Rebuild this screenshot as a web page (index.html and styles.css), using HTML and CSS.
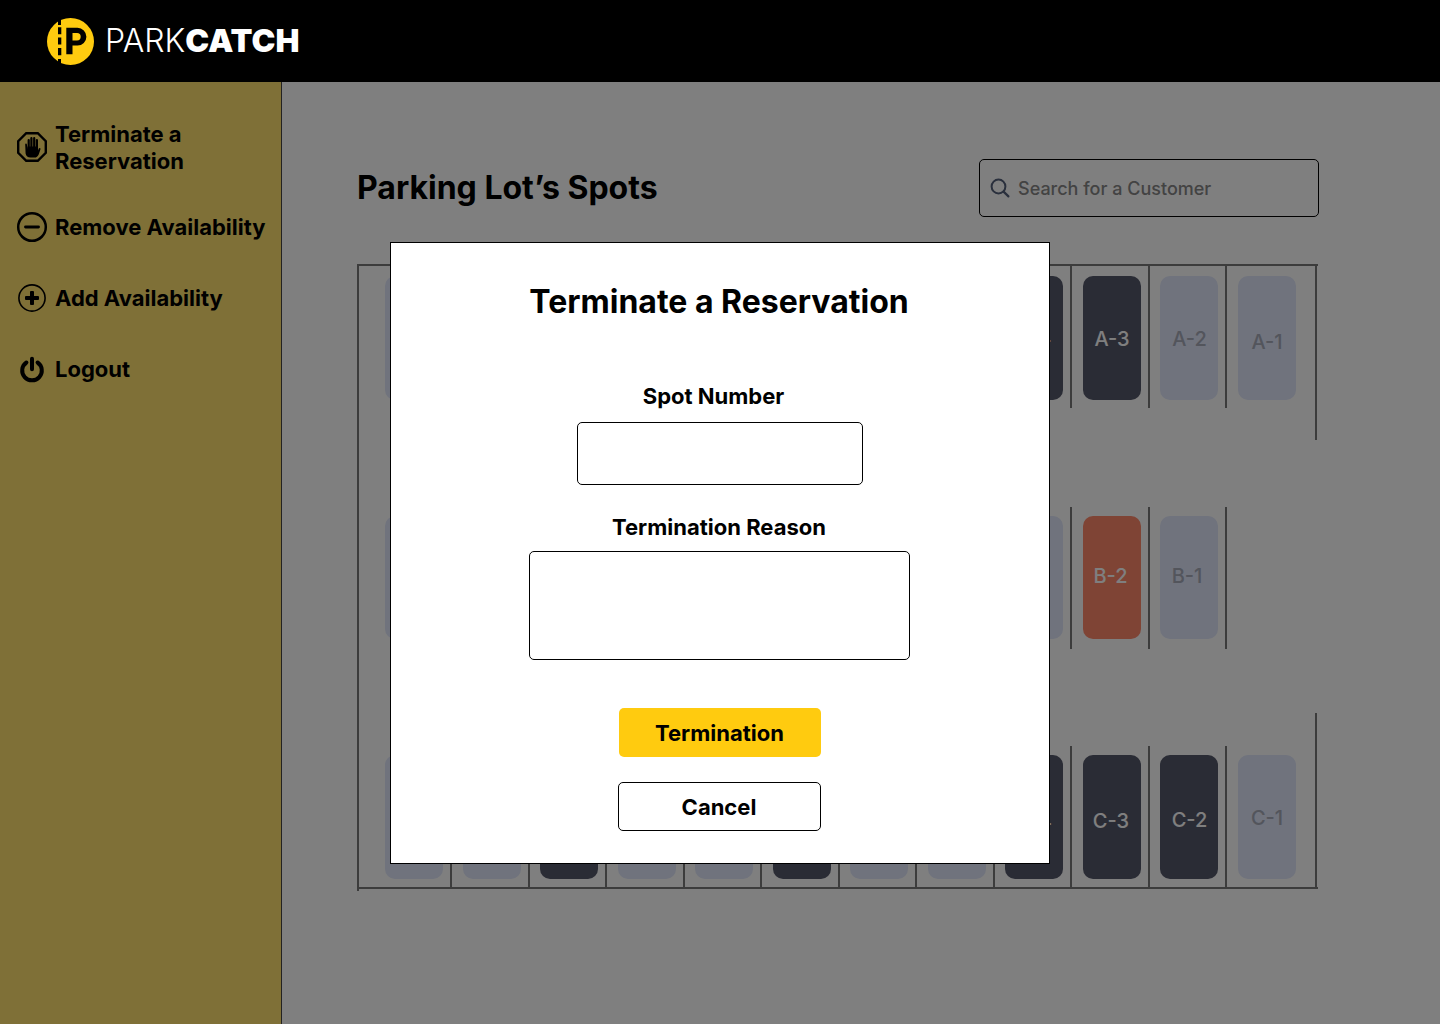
FILE: index.html
```html
<!DOCTYPE html>
<html lang="en">
<head>
<meta charset="utf-8">
<title>ParkCatch</title>
<link rel="stylesheet" href="styles.css">
</head>
<body>
<header class="topbar">
  <svg class="logo" width="48" height="48" viewBox="0 0 48 48">
    <circle cx="23.500" cy="24.500" r="23.500" fill="#ffcb0f"/>
    <path d="M11 0h3v8h-3zM11 10.300h3.300v7h-3.300zM11 20.500h3.300v7h-3.300zM11 31h3.300v7.300h-3.300zM11 42h3v6h-3z" fill="#000"/>
    <path fill-rule="evenodd" d="M19.300 10.800h11.200a8.900 8.900 0 0 1 0 17.800h-5v8.600h-6.200zM25.500 16v7.400h4.500a3.700 3.700 0 0 0 0-7.400z" fill="#000"/>
  </svg>
  <div class="brand">PARK<span class="brand-bold">CATCH</span></div>
</header>
<div class="layout">
  <nav class="sidebar">
    <a class="nav-item nav-tall">
      <svg width="32" height="32" viewBox="0 0 32 32">
        <path d="M10.200 2.200h11.600l8 8v11.600l-8 8H10.200l-8-8V10.200z" fill="none" stroke="#000" stroke-width="2.400"/>
        <path d="M12.700 18V9M15.400 17V7.200M18.200 17V7.200M20.900 18V9" fill="none" stroke="#000" stroke-width="2.200" stroke-linecap="round"/>
        <path d="M11.600 15.500H22V19.500L22.800 17.600Q23.400 16.500 24.300 17.200Q24.600 17.600 24.400 18.600L22.800 23.200Q21.300 26.600 18.500 26.600H14.500Q10.300 26.600 9.600 22.500L9.200 13.500Q9.200 12.500 10 12.500Q10.800 12.500 10.900 13.500L11.600 18z" fill="#000"/>
      </svg>
      <span class="nav-lines">Terminate a<br>Reservation</span>
    </a>
    <a class="nav-item">
      <svg width="32" height="32" viewBox="0 0 32 32"><circle cx="16" cy="16" r="13.800" fill="none" stroke="#000" stroke-width="2.500"/><path d="M9.500 16h13" stroke="#000" stroke-width="2.900" stroke-linecap="round"/></svg>
      <span>Remove Availability</span>
    </a>
    <a class="nav-item">
      <svg width="32" height="32" viewBox="0 0 32 32"><circle cx="16" cy="16" r="13.100" fill="none" stroke="#000" stroke-width="1.600"/><path d="M9.500 16h13M16 9.500v13" stroke="#000" stroke-width="4"/><path d="M9 16h14M16 9v14" stroke="#000" stroke-width="3"/></svg>
      <span>Add Availability</span>
    </a>
    <a class="nav-item">
      <svg width="32" height="32" viewBox="0 0 32 32"><path d="M10.400 9.500A9.800 9.800 0 1 0 21.600 9.500M16 5.800V16.200" fill="none" stroke="#000" stroke-width="4" stroke-linecap="round"/></svg>
      <span>Logout</span>
    </a>
  </nav>
  <main class="content">
    <div class="heading">
      <h1 class="title">Parking Lot’s Spots</h1>
      <div class="search">
        <svg width="22" height="22" viewBox="0 0 22 22"><circle cx="8.500" cy="9.500" r="6.900" fill="none" stroke="#54607a" stroke-width="2"/><path d="M13.600 14.600L18.400 19.400" stroke="#54607a" stroke-width="2.200" stroke-linecap="round"/></svg>
        <span>Search for a Customer</span>
      </div>
    </div>
    <div class="lot">
      <div class="side"></div>
      <div class="rows">
        <div class="row row-a">
          <div class="slot"><div class="spot"></div></div>
          <div class="slot"><div class="spot"></div></div>
          <div class="slot"><div class="spot"></div></div>
          <div class="slot"><div class="spot"></div></div>
          <div class="slot"><div class="spot"></div></div>
          <div class="slot"><div class="spot"></div></div>
          <div class="slot"><div class="spot"></div></div>
          <div class="slot"><div class="spot"></div></div>
          <div class="slot"><div class="spot taken left-1">A-4</div></div>
          <div class="slot"><div class="spot taken drop-1">A-3</div></div>
          <div class="slot"><div class="spot drop-1">A-2</div></div>
          <div class="slot last"><div class="spot drop-4">A-1</div></div>
        </div>
        <div class="row row-b">
          <div class="slot"><div class="spot"></div></div>
          <div class="slot"><div class="spot"></div></div>
          <div class="slot"><div class="spot"></div></div>
          <div class="slot"><div class="spot"></div></div>
          <div class="slot"><div class="spot"></div></div>
          <div class="slot"><div class="spot"></div></div>
          <div class="slot"><div class="spot"></div></div>
          <div class="slot"><div class="spot"></div></div>
          <div class="slot"><div class="spot"></div></div>
          <div class="slot"><div class="spot expired left-3">B-2</div></div>
          <div class="slot"><div class="spot left-4">B-1</div></div>
        </div>
        <div class="row row-c">
          <div class="slot"><div class="spot"></div></div>
          <div class="slot"><div class="spot"></div></div>
          <div class="slot"><div class="spot taken"></div></div>
          <div class="slot"><div class="spot"></div></div>
          <div class="slot"><div class="spot"></div></div>
          <div class="slot"><div class="spot taken"></div></div>
          <div class="slot"><div class="spot"></div></div>
          <div class="slot"><div class="spot"></div></div>
          <div class="slot"><div class="spot taken drop-4 left-1">C-4</div></div>
          <div class="slot"><div class="spot taken drop-4 left-1">C-3</div></div>
          <div class="slot"><div class="spot taken drop-3">C-2</div></div>
          <div class="slot last"><div class="spot drop-1">C-1</div></div>
        </div>
      </div>
      <div class="walls"><div class="wall"></div><div class="wall"></div></div>
    </div>
  </main>
</div>
<div class="overlay">
  <form class="modal">
    <h2 class="modal-title">Terminate a Reservation</h2>
    <label class="label label-spot" for="spot">Spot Number</label>
    <input class="field field-spot" id="spot" type="text">
    <label class="label label-reason" for="reason">Termination Reason</label>
    <textarea class="field field-reason" id="reason"></textarea>
    <button class="btn btn-primary" type="button">Termination</button>
    <button class="btn btn-secondary" type="button">Cancel</button>
  </form>
</div>
</body>
</html>
```
FILE: styles.css
```css
* { box-sizing: border-box; }
body {
  margin: 0;
  width: 1440px;
  height: 1024px;
  overflow: hidden;
  background: #fff;
  color: #000;
  font-family: Inter, "Liberation Sans", sans-serif;
}
.topbar {
  height: 82px;
  padding-left: 47px;
  display: flex;
  align-items: center;
  gap: 10px;
  background: #000;
  color: #fff;
}
.brand { font-size: 32px; font-weight: 300; line-height: 40px; white-space: nowrap; }
.brand-bold { font-weight: 900; }
.layout { display: flex; height: 942px; }
.sidebar {
  width: 282px;
  flex: none;
  padding: 38px 0 0 16px;
  background: #ffe06e;
  border-right: 1px solid #444;
  display: flex;
  flex-direction: column;
  gap: 39px;
}
.nav-item {
  display: flex;
  align-items: center;
  gap: 7px;
  height: 32px;
  font-size: 22px;
  font-weight: 700;
  line-height: 27px;
  white-space: nowrap;
}
.nav-item svg { flex: none; }
.nav-tall { height: 54px; margin-bottom: -2px; }
.nav-lines { padding-top: 2px; }
.content { width: 1158px; padding: 77px 0 0 75px; }
.heading {
  width: 962px;
  height: 58px;
  display: flex;
  align-items: center;
  justify-content: space-between;
}
.title { margin: 0; font-size: 32px; font-weight: 700; line-height: 40px; }
.search {
  width: 340px;
  height: 58px;
  padding-left: 10px;
  display: flex;
  align-items: center;
  gap: 6px;
  border: 1px solid #000;
  border-radius: 5px;
  color: #868686;
  font-size: 18px;
  font-weight: 500;
}
.lot {
  margin-top: 47px;
  width: 961px;
  height: 625px;
  display: flex;
  border: solid #787878;
  border-width: 2px 0;
}
.side { width: 2px; margin: -2px 0 -4px; background: #787878; }
.rows { width: 956px; flex: none; display: flex; flex-direction: column; }
.row { display: flex; padding-left: 15.700px; }
.row-a { height: 142px; }
.row-b { height: 143px; margin-top: 99px; }
.row-c { height: 141px; margin-top: 97px; }
.slot {
  width: 77.500px;
  flex: none;
  padding: 9.300px 0 0 10.800px;
  border-right: 2px solid #787878;
}
.row-a .slot { padding-top: 10.300px; }
.row-c .slot { padding-top: 8.900px; }
.slot.last { border-right: 0; }
.spot {
  width: 58px;
  height: 123.500px;
  display: flex;
  align-items: center;
  justify-content: center;
  border-radius: 10px;
  background: #e0e6fa;
  color: #a6aab8;
  font-size: 20px;
  font-weight: 500;
}
.spot.taken { background: #54586a; color: #fff; }
.spot.expired { background: #ff886b; color: #fff; }
.spot.drop-1 { padding-top: 2px; }
.spot.drop-3 { padding-top: 6px; }
.spot.drop-4 { padding-top: 8px; }
.left-1 { padding-right: 2px; }
.left-3 { padding: 0 3px 3px 0; }
.left-4 { padding: 0 5px 3px 0; }
.walls { display: flex; flex-direction: column; justify-content: space-between; }
.wall { width: 2px; height: 174px; background: #787878; }
.overlay {
  position: absolute;
  top: 82px;
  left: 0;
  width: 1440px;
  height: 942px;
  padding: 160px 0 0 390px;
  background: rgba(0, 0, 0, 0.5);
}
.modal {
  width: 660px;
  height: 622px;
  padding-top: 39px;
  display: flex;
  flex-direction: column;
  align-items: center;
  background: #fff;
  border: 1px solid #000;
}
.modal-title { margin: 0 2px 0 0; font-size: 32px; font-weight: 700; line-height: 40px; }
.label { font-size: 22px; font-weight: 700; line-height: 28px; }
.label-spot { margin: 60px 13px 12px 0; }
.label-reason { margin: 28px 2px 10px 0; }
.field {
  display: block;
  padding: 8px;
  border: 1px solid #000;
  border-radius: 5px;
  background: #fff;
  font: 20px Inter, sans-serif;
  resize: none;
  outline: none;
}
.field-spot { width: 286px; height: 63px; }
.field-reason { width: 381px; height: 109px; margin-right: 1px; }
.btn {
  padding: 0;
  height: 49px;
  border-radius: 5px;
  color: #000;
  font: 700 22px/28px Inter, sans-serif;
}
.btn-primary { width: 202px; margin-top: 48px; padding-right: 1px; border: 0; background: #ffcb0f; }
.btn-secondary { width: 203px; margin: 25px 1px 0 0; padding-right: 1px; border: 1px solid #000; background: #fff; }
```
